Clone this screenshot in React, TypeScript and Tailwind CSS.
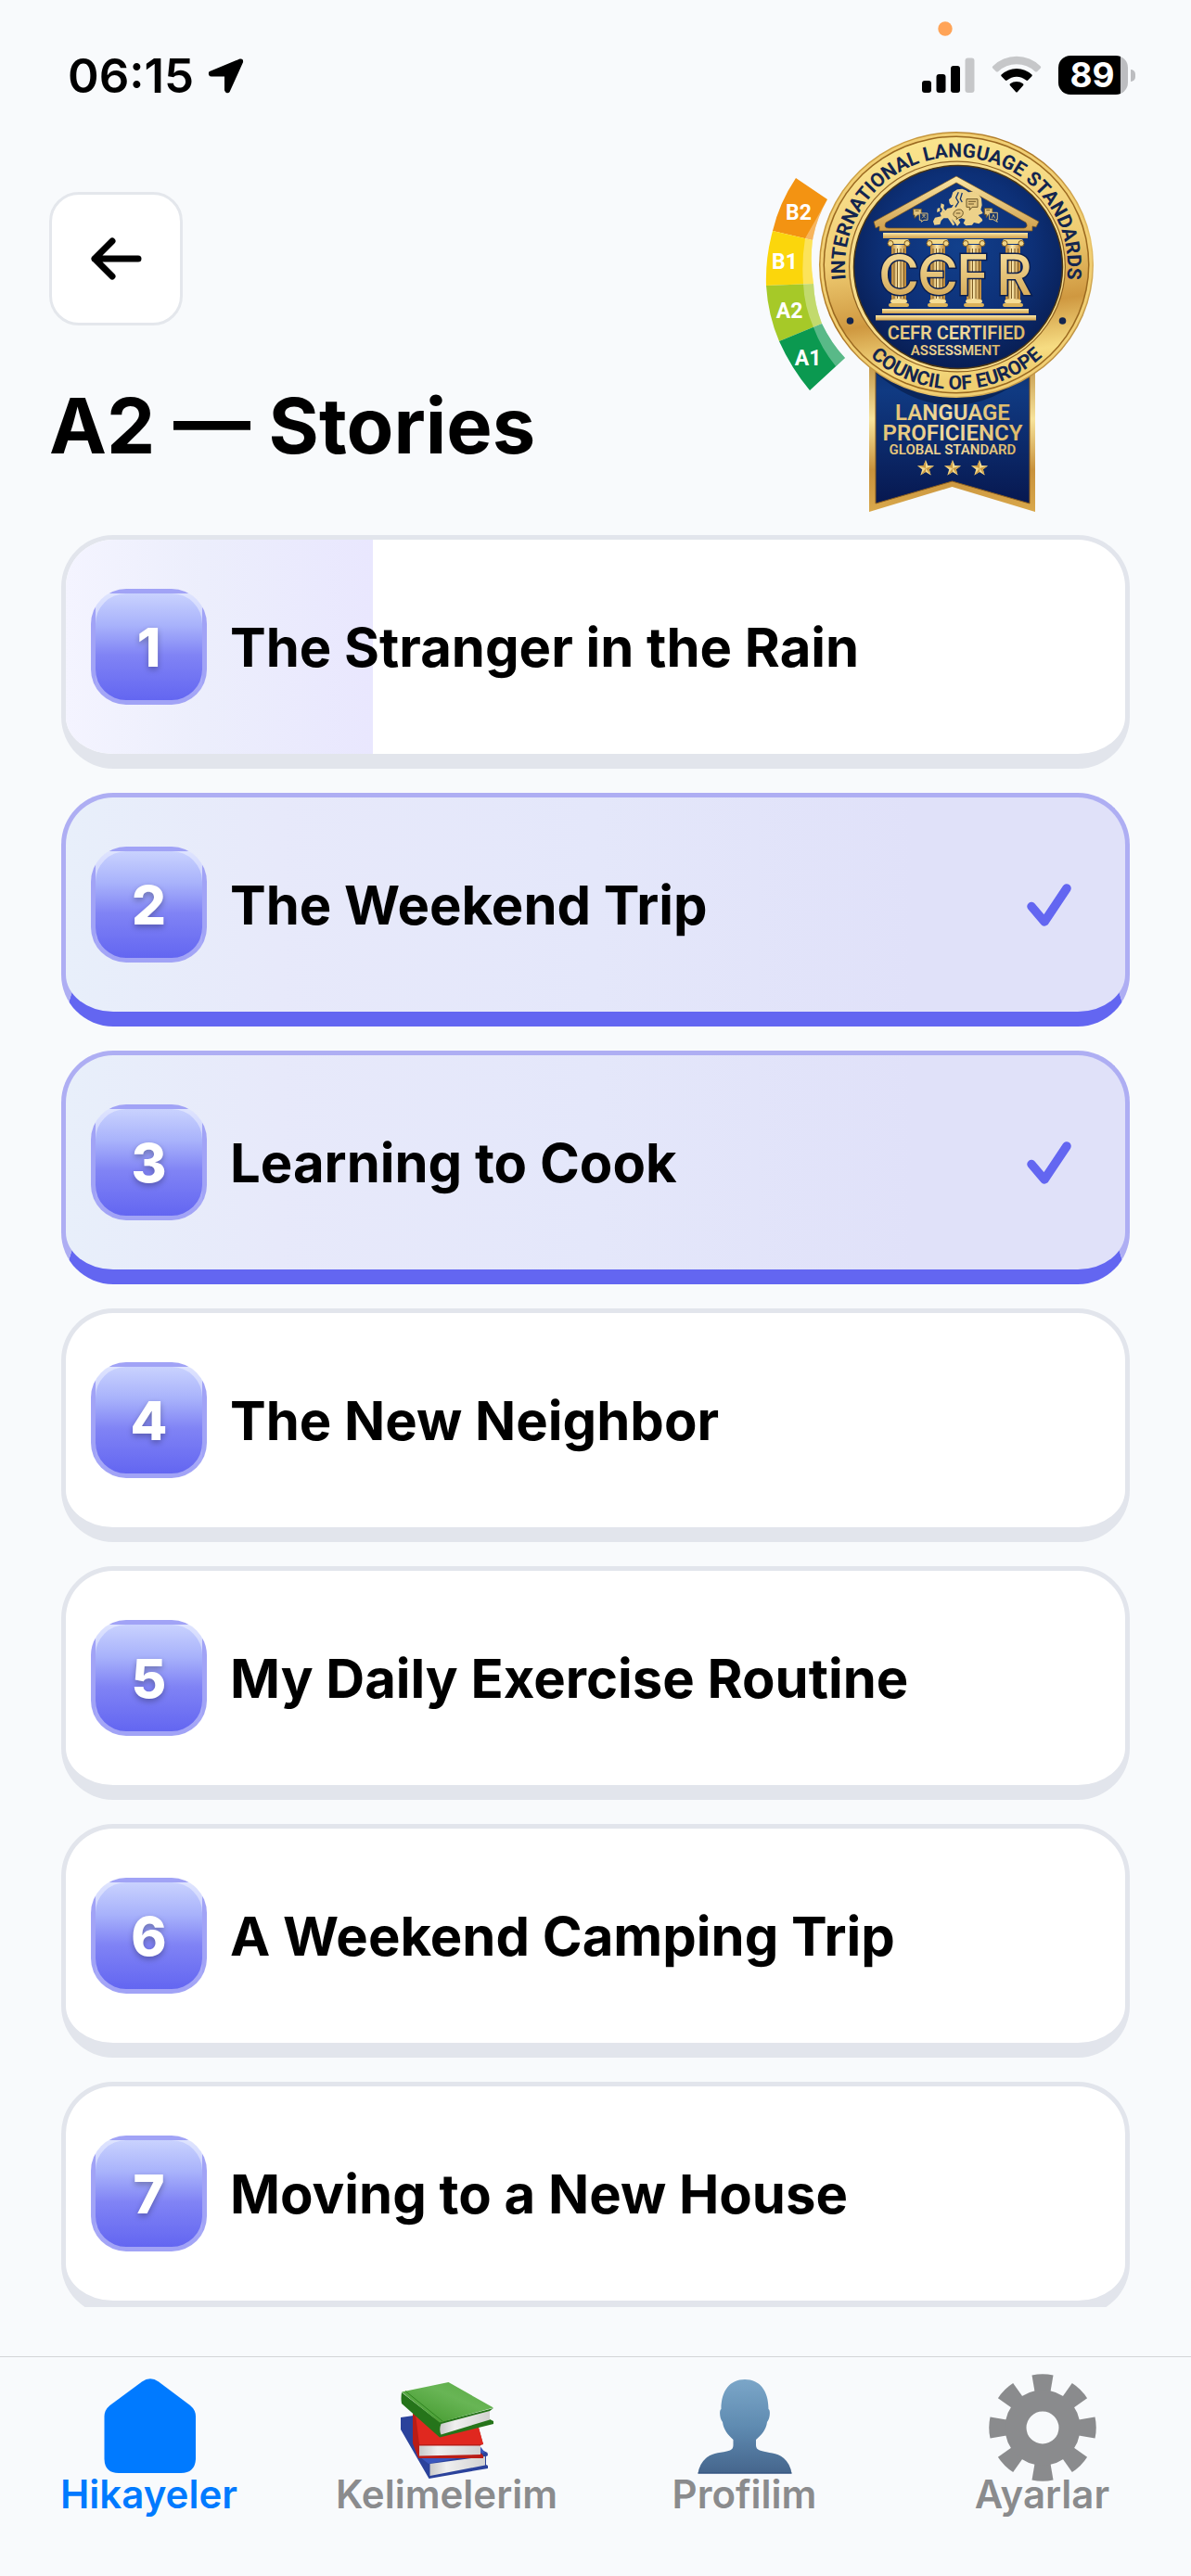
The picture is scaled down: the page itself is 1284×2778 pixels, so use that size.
import React from "react";

type Story = { title: string; done?: boolean; progress?: number };

const stories: Story[] = [
  { title: "The Stranger in the Rain", progress: 29 },
  { title: "The Weekend Trip", done: true },
  { title: "Learning to Cook", done: true },
  { title: "The New Neighbor" },
  { title: "My Daily Exercise Routine" },
  { title: "A Weekend Camping Trip" },
  { title: "Moving to a New House" },
];

function StatusBar() {
  return (
    <div className="relative flex h-[136px] shrink-0 items-start justify-between pl-[73px] pr-[60px] pt-[52px]">
      <div className="flex items-center gap-[14px]">
        <span className="text-[51px] font-semibold leading-[60px]">06:15</span>
        <svg width="40" height="40" viewBox="0 0 40 40" aria-label="Location">
          <path
            d="M36 3 L3.500 16.500 Q3 19 5 19 H20.500 V35 Q22 38 23.500 36 L37.500 5 Q38 2.500 36 3 Z"
            fill="#000"
            stroke="#000"
            strokeWidth="3"
            strokeLinejoin="round"
          />
        </svg>
      </div>
      <svg width="16" height="16" viewBox="0 0 16 16" className="absolute right-[257px] top-[23px]" aria-hidden="true">
        <circle cx="8" cy="8" r="7.700" fill="#ffa458" />
      </svg>
      <div className="flex items-center gap-[18px] pt-[8px]">
        <svg width="57" height="42" viewBox="0 0 57 42" aria-label="Signal">
          <rect x="0" y="27" width="10" height="13" rx="3" />
          <rect x="15.500" y="20" width="10" height="20" rx="3" />
          <rect x="31" y="11" width="10" height="29" rx="3" />
          <rect x="46.500" y="2.500" width="10" height="37.500" rx="3" fill="#c6c7c9" />
        </svg>
        <svg width="54" height="42" viewBox="0 0 54 42" aria-label="Wi-Fi">
          <path d="M1.200 11.500 A36.500 36.500 0 0 1 52.800 11.500 Q53.600 12.400 52.800 13.400 L49 17.200 Q48 18 47 17.200 A29 29 0 0 0 7 17.200 Q6 18 5 17.200 L1.200 13.400 Q0.400 12.400 1.200 11.500 Z" fill="#c6c7c9" />
          <path d="M10.500 20.500 A24 24 0 0 1 43.500 20.500 Q44.200 21.400 43.400 22.300 L39.200 26.500 Q38.200 27.300 37.200 26.500 A15.500 15.500 0 0 0 16.800 26.500 Q15.800 27.300 14.800 26.500 L10.600 22.300 Q9.800 21.400 10.500 20.500 Z" />
          <path d="M20 30.300 A11.500 11.500 0 0 1 34 30.300 Q35 31.200 34 32.200 L28 39 Q27 40 26 39 L20 32.200 Q19 31.200 20 30.300 Z" />
        </svg>
        <div className="flex items-center gap-[3px]">
          <div className="flex h-[42px] w-[75px] items-center justify-center rounded-[13px] bg-[linear-gradient(to_right,#000_67px,#bcbdc0_67px)] pr-[2px] text-[37px] font-bold leading-[42px] text-white">
            89
          </div>
          <div className="h-[13px] w-[5px] rounded-r-full bg-[#bcbdc0]" />
        </div>
      </div>
    </div>
  );
}

function Column({ x }: { x: number }) {
  return (
    <g>
      <rect x={x - 8} y="264" width="16" height="61" fill="url(#shaft)" />
      {[-5, -1.500, 2, 5.500].map((d) => (
        <path key={d} d={`M${x + d} 268 V322`} stroke="#7c5a22" strokeWidth="1" />
      ))}
      <rect x={x - 11} y="258" width="22" height="5" rx="2" fill="#f3d98a" />
      <circle cx={x - 9} cy="262.500" r="3" fill="#f0d588" stroke="#7a541b" strokeWidth="1" />
      <circle cx={x + 9} cy="262.500" r="3" fill="#f0d588" stroke="#7a541b" strokeWidth="1" />
      <rect x={x - 9} y="323" width="18" height="4" rx="2" fill="#f6de96" />
      <rect x={x - 11} y="327" width="22" height="4" rx="2" fill="#dcb35a" />
    </g>
  );
}

function Star({ x }: { x: number }) {
  return (
    <g transform={`translate(${x} 505)`}>
      <path
        d="M0 -9 L2.400 -3 L9 -2.800 L3.800 1.200 L5.600 7.600 L0 4 L-5.600 7.600 L-3.800 1.200 L-9 -2.800 L-2.400 -3 Z"
        fill="#f3d98c"
      />
      <path d="M0 -9 L0 0 L-9 -2.800 L-2.400 -3 Z M9 -2.800 L0 0 L5.600 7.600 L3.800 1.200 Z M0 4 L0 0 L-5.600 7.600 Z" fill="#c99a45" />
    </g>
  );
}

function EuropeMap() {
  return (
    <g transform="translate(820 136) scale(0.3333)">
      <path
        d="M611 250 L609 238 L617 230 L622 214 L636 205 L652 203 L664 208 L672 214 L690 212 L706 222 L714 234 L716 256 L712 270 L719 282 L704 288 L716 300 L718 306 L706 316 L690 312 L684 320 L664 322 L656 314 L662 302 L650 298 L640 302 L646 312 L636 324 L630 314 L618 300 L628 318 L622 322 L606 298 L592 298 L584 306 L580 318 L562 320 L558 308 L564 296 L584 292 L580 280 L596 276 L604 266 L618 264 L624 254 L616 256 Z"
        fill="#edd28a"
      />
      <path d="M640 214 L632 232 L640 246 L630 262 M652 216 L646 236 L652 246" stroke="#14356f" strokeWidth="4" fill="none" />
      <path d="M584 250 L594 254 L592 266 L600 276 L584 280 L588 270 L582 262 Z M572 266 L580 264 L580 276 L570 278 Z" fill="#edd28a" />
      <g fill="#e3c57e" stroke="#6a5528" strokeWidth="3">
        <path d="M666 236 H702 V262 H684 L676 272 V262 H666 Z" />
        <path d="M494 268 H520 V288 H508 L498 298 V288 H494 Z" />
        <path d="M724 266 H750 V286 H738 L730 296 V286 H724 Z" />
        <path d="M624 282 Q630 268 646 270 Q658 274 654 286 Q650 296 640 296 L634 302 L634 294 Q622 292 624 282 Z" />
      </g>
      <g fill="#16366f" stroke="#dcc07b" strokeWidth="3">
        <path d="M514 282 H540 V304 H528 L520 310 V304 H514 Z" />
        <path d="M740 280 H766 V302 H762 L766 310 L752 302 H740 Z" />
      </g>
      <path d="M672 244 H696 M672 252 H690 M632 282 H646 M500 274 H512 M730 272 H742" stroke="#6a5528" strokeWidth="3" />
      <path d="M522 288 H534 M528 286 V292 L522 298 M528 292 L534 298 M748 298 L753 286 L758 298" stroke="#dcc07b" strokeWidth="2.500" fill="none" />
    </g>
  );
}

function Badge() {
  return (
    <svg
      className="mr-[47px] h-[420px] w-[364px] shrink-0"
      viewBox="820 136 364 420"
      role="img"
      aria-label="CEFR certified assessment"
    >
      <defs>
        <linearGradient id="ring" x1="0" y1="0" x2="0.150" y2="1">
          <stop offset="0" stopColor="#fbe88f" />
          <stop offset="0.250" stopColor="#f6db86" />
          <stop offset="0.500" stopColor="#efcc72" />
          <stop offset="0.750" stopColor="#cf9840" />
          <stop offset="0.930" stopColor="#f6dc82" />
          <stop offset="1" stopColor="#f0cf72" />
        </linearGradient>
        <linearGradient id="rim" x1="0" y1="0" x2="1" y2="1">
          <stop offset="0" stopColor="#e5bd58" />
          <stop offset="0.400" stopColor="#a8701f" />
          <stop offset="0.700" stopColor="#e9c368" />
          <stop offset="1" stopColor="#94601c" />
        </linearGradient>
        <radialGradient id="navy" cx="0.500" cy="0.400" r="0.650">
          <stop offset="0" stopColor="#12408c" />
          <stop offset="0.550" stopColor="#0d3077" />
          <stop offset="1" stopColor="#071a4c" />
        </radialGradient>
        <linearGradient id="ribbon" x1="0" y1="0" x2="0" y2="1">
          <stop offset="0" stopColor="#0b2a66" />
          <stop offset="0.300" stopColor="#103a82" />
          <stop offset="1" stopColor="#071850" />
        </linearGradient>
        <linearGradient id="ribbonEdge" x1="0" y1="0" x2="0" y2="1">
          <stop offset="0" stopColor="#b07b2b" />
          <stop offset="0.450" stopColor="#f7e39b" />
          <stop offset="0.750" stopColor="#c8923c" />
          <stop offset="1" stopColor="#d9a84c" />
        </linearGradient>
        <linearGradient id="gold" x1="0" y1="0" x2="0" y2="1">
          <stop offset="0" stopColor="#fbe7a6" />
          <stop offset="1" stopColor="#cf9f4c" />
        </linearGradient>
        <linearGradient id="goldText" x1="0" y1="0" x2="1" y2="0">
          <stop offset="0" stopColor="#e3c377" />
          <stop offset="0.500" stopColor="#f1dba0" />
          <stop offset="1" stopColor="#dcb866" />
        </linearGradient>
        <linearGradient id="shaft" x1="0" y1="0" x2="1" y2="0">
          <stop offset="0" stopColor="#b98334" />
          <stop offset="0.450" stopColor="#fbe9ad" />
          <stop offset="1" stopColor="#b98334" />
        </linearGradient>
        <path id="topArc" d="M912.500 306 A120 118 0 1 1 1149.500 306" />
        <path id="bottomArc" d="M894 286 A137 134 0 0 0 1168 286" />
      </defs>

      {/* Level scale */}
      <path d="M858 192 Q840 219 833 249 L876 259 Q880 236 892 215 Z" fill="#f39312" />
      <path d="M833 249 Q825 278 826 308 L877 306 Q873 282 876 259 Z" fill="#fbd60c" />
      <path d="M826 308 Q828 340 840 368 L886 349 Q878 328 877 306 Z" fill="#a6c928" />
      <path d="M840 368 Q853 397 873 421 L911 386 Q896 370 886 349 Z" fill="#0b9950" />
      <path
        d="M892 215 Q880 236 876 259 Q873 282 877 306 Q878 328 886 349 Q896 370 911 386 L901 395 Q885 375 877 353 Q867 330 866 306 Q864 282 868 257 Z"
        fill="#fff"
        opacity="0.320"
      />
      <g fontFamily="Roboto" fontWeight="700" fontSize="23" fill="#fff" textAnchor="middle">
        <text x="861" y="237">B2</text>
        <text x="846" y="290">B1</text>
        <text x="851" y="343">A2</text>
        <text x="871" y="394">A1</text>
      </g>

      {/* Ribbon */}
      <path d="M937 370 H1116 V552 L1026.500 525 L937 552 Z" fill="url(#ribbonEdge)" />
      <path d="M944 370 H1110 V543 L1026.500 519 L944 543 Z" fill="url(#ribbon)" stroke="#8a5d1e" strokeWidth="1" />
      <path d="M944 390 H1110 V402 Q1070 437 1027 437 Q984 437 944 402 Z" fill="#04102e" opacity="0.450" />

      {/* Medal */}
      <ellipse cx="1031" cy="285.500" rx="148" ry="143.500" fill="url(#rim)" />
      <ellipse cx="1031" cy="285.500" rx="146.500" ry="142" fill="#f1cf74" />
      <ellipse cx="1031" cy="285.500" rx="143.500" ry="139" fill="#9a681f" />
      <ellipse cx="1031" cy="285.500" rx="142" ry="137.500" fill="url(#ring)" />
      <ellipse cx="1032" cy="287.500" rx="117" ry="114" fill="#8f611f" />
      <ellipse cx="1032" cy="287.500" rx="115.800" ry="112.800" fill="#f6dc8c" />
      <ellipse cx="1033" cy="288" rx="112.500" ry="109.500" fill="url(#navy)" stroke="#4b3513" strokeWidth="1.500" />
      <circle cx="916.500" cy="346" r="3.800" fill="#13254f" />
      <circle cx="1145.500" cy="346" r="3.800" fill="#13254f" />
      <g fontFamily="Roboto" fontWeight="700" fill="#13254f" textAnchor="middle">
        <text fontSize="21">
          <textPath href="#topArc" startOffset="50%">INTERNATIONAL LANGUAGE STANDARDS</textPath>
        </text>
        <text fontSize="21">
          <textPath href="#bottomArc" startOffset="50%">COUNCIL OF EUROPE</textPath>
        </text>
      </g>

      {/* Temple */}
      <path
        d="M1031 190 L1120 239 L1117 245 L1113 244 V249 H948 V244 L944 246 L942 239 Z M1031 197 L955 240 Q952 246 958 246 H1104 Q1109 245 1106 240 Z"
        fill="url(#gold)"
        fillRule="evenodd"
        stroke="#7a541b"
        strokeWidth="0.700"
      />
      <rect x="952" y="251" width="156" height="6" fill="url(#gold)" />
      <EuropeMap />
      <Column x={969} />
      <Column x={1011} />
      <Column x={1050} />
      <Column x={1092} />
      <rect x="951" y="333" width="158" height="5" fill="url(#gold)" />
      <rect x="944" y="340" width="173" height="5.500" fill="url(#gold)" />
      <text
        y="318"
        x="947 989 1031 1074"
        fontFamily="Inter"
        fontWeight="500"
        fontSize="60"
        fill="url(#gold)"
        stroke="#0b1f50"
        strokeWidth="3"
        paintOrder="stroke"
      >
        CЄFR
      </text>

      <g fontFamily="Roboto" fill="url(#goldText)" textAnchor="middle">
        <text x="1031" y="366" fontSize="20" fontWeight="600">CEFR CERTIFIED</text>
        <text x="1030" y="383" fontSize="15" fontWeight="600">ASSESSMENT</text>
        <text x="1027" y="453" fontSize="24" fontWeight="600">LANGUAGE</text>
        <text x="1027" y="475" fontSize="24" fontWeight="600">PROFICIENCY</text>
        <text x="1027" y="490" fontSize="15" fontWeight="600">GLOBAL STANDARD</text>
      </g>
      <Star x={998} />
      <Star x={1027} />
      <Star x={1056} />
    </svg>
  );
}

function Header() {
  return (
    <header className="flex shrink-0 items-start justify-between px-[53px]">
      <div className="pt-[71px]">
        <button
          aria-label="Back"
          className="flex size-[144px] items-center justify-center rounded-[32px] border-[3px] border-[#e4e7ec] bg-white"
        >
          <svg width="55" height="46" viewBox="0 0 55 46" fill="none" stroke="#000" strokeWidth="7" strokeLinecap="round" strokeLinejoin="round">
            <path d="M51 23 H4 M23 4 L4 23 L23 42" />
          </svg>
        </button>
        <h1 className="mt-[60px] whitespace-nowrap text-[83px] font-bold leading-[96px]">A2 — Stories</h1>
      </div>
      <Badge />
    </header>
  );
}

function StoryCard({ story, index }: { story: Story; index: number }) {
  const tone = story.done
    ? "border-[#aeaef3] border-b-[#6366f1] bg-[linear-gradient(to_right,#e8effa,#e7e9fa_20%,#e4e7fa_50%,#e0e1f9_80%)]"
    : "border-[#e2e5ec] bg-white";
  return (
    <li className="shrink-0">
      <button
        className={`relative flex h-[252px] w-full items-center gap-[25px] overflow-hidden rounded-[56px] border-[5px] border-b-[16px] pl-[27px] pr-[58px] text-left ${tone}`}
      >
        {story.progress !== undefined && (
          <span
            className="absolute inset-y-0 left-0 bg-[linear-gradient(to_right,#f4f4ff,#eceefc_45%,#e9e7fe)]"
            style={{ width: `${story.progress}%` }}
          />
        )}
        <span className="relative flex size-[125px] shrink-0 items-center justify-center rounded-[38px] border-[5px] border-white/40 bg-[#6366f1] bg-[linear-gradient(to_bottom,#c9d2fe,#a8b2fb_30%,#8083f5_58%,#6366f1)] bg-no-repeat text-[58px] font-extrabold leading-none text-white [text-shadow:0_3px_6px_rgba(0,0,0,0.28)]">
          {index + 1}
        </span>
        <span className="relative grow whitespace-nowrap text-[58px] font-bold leading-[72px]">{story.title}</span>
        {story.done && (
          <svg width="48" height="48" viewBox="0 0 48 48" fill="none" stroke="#6366f1" strokeWidth="9.500" strokeLinecap="round" strokeLinejoin="round" aria-label="Completed">
            <path d="M5 25.500 L19 42 L43 6" />
          </svg>
        )}
      </button>
    </li>
  );
}

function HouseIcon() {
  return (
    <svg width="116" height="116" viewBox="0 0 116 116" aria-hidden="true">
      <path
        d="M50 8.500 Q59 2 68 8.500 L102 34 Q108 39 108 46 V92 Q107 107 92 107 H25 Q10 107 9.500 92 V46 Q9.500 39 15.500 34 Z"
        fill="#007aff"
      />
    </svg>
  );
}

function BooksIcon() {
  return (
    <svg width="116" height="116" viewBox="0 0 116 116" aria-hidden="true">
      <defs>
        <linearGradient id="greenCover" x1="0" y1="1" x2="1" y2="0">
          <stop offset="0" stopColor="#3d9427" />
          <stop offset="0.600" stopColor="#68b555" />
          <stop offset="1" stopColor="#58a942" />
        </linearGradient>
        <linearGradient id="pages" x1="0" y1="0" x2="1" y2="0">
          <stop offset="0" stopColor="#c9c9c9" />
          <stop offset="0.300" stopColor="#efefef" />
          <stop offset="1" stopColor="#d2d2d2" />
        </linearGradient>
      </defs>
      <path d="M8 47 L22 45 L101.500 85 L102 88 L100 89 V98 L102 99 V102 L38.500 113 L8 60 Z" fill="#2b429b" />
      <path d="M24 86 L38 97 L99 85 L92 76 Z" fill="#3a57bd" />
      <path d="M39.500 97 L99 89 V98.500 L39.500 110 Z" fill="url(#pages)" />
      <path d="M21 43 L92 58 L97 76 L94 77 V85 L97 88 V91 H27 L21 75 Z" fill="#b91d17" />
      <path d="M24 44 L92 58 L97 76 H28 Z" fill="#e0281f" />
      <path d="M28 77.500 H94 V87 L28 88.500 Z" fill="url(#pages)" />
      <path d="M9 20 Q8 27 9 32 L50 68.500 L108 54 V51 L104 49 V40 L108 37 L50 52 Z" fill="#25741a" />
      <path d="M9 19.500 L59.500 9 L108 36.500 L50 52.500 Z" fill="url(#greenCover)" />
      <path d="M51.500 54 L104 40 V49.500 L51.500 65.500 Q49 60 51.500 54 Z" fill="url(#pages)" />
      <path d="M13 18.500 L53 51" stroke="#2f8420" strokeWidth="1" />
    </svg>
  );
}

function PersonIcon() {
  return (
    <svg width="116" height="116" viewBox="0 0 116 116" aria-hidden="true">
      <defs>
        <linearGradient id="person" x1="0" y1="0" x2="0" y2="1">
          <stop offset="0" stopColor="#7ba6c8" />
          <stop offset="0.500" stopColor="#5f8bb1" />
          <stop offset="1" stopColor="#45658c" />
        </linearGradient>
      </defs>
      <path
        d="M58 6 C42 6 32.500 18 32.500 38 C30 39 31 49 34 52 C35 60 40 66 45.500 71 V77 Q45.500 81 42 82.500 C32 86 24 84 16 91 Q9 97 7.500 107.500 H108.500 Q107 97 100 91 C92 84 84 86 74 82.500 Q70 81 70 77 V71 C76 66 81 60 82 52 C85 49 86 39 83.500 38 C83.500 18 74 6 58 6 Z"
        fill="url(#person)"
      />
      <path d="M7.500 107 H108.500" stroke="#2f4f7d" strokeWidth="1" />
    </svg>
  );
}

function GearIcon() {
  return (
    <svg width="116" height="116" viewBox="0 0 116 116" fill="#8a8b8d" aria-hidden="true">
      {[0, 45, 90, 135, 180, 225, 270, 315].map((a) => (
        <path key={a} d="M46.500 1.500 Q58 -1 69.500 1.500 L66 22 H50 Z" transform={`rotate(${a} 58 58)`} />
      ))}
      <circle cx="58" cy="58" r="29" fill="none" stroke="#8a8b8d" strokeWidth="23" />
    </svg>
  );
}

const tabs = [
  { label: "Hikayeler", Icon: HouseIcon, active: true },
  { label: "Kelimelerim", Icon: BooksIcon },
  { label: "Profilim", Icon: PersonIcon },
  { label: "Ayarlar", Icon: GearIcon },
];

export default function App() {
  return (
    <div className="flex h-screen flex-col bg-[#f8fafc] font-['Inter',sans-serif] text-black">
      <StatusBar />
      <Header />
      <main className="mx-[66px] mt-[21px] min-h-0 grow overflow-hidden">
        <ol className="flex flex-col gap-[26px]">
          {stories.map((story, i) => (
            <StoryCard key={story.title} story={story} index={i} />
          ))}
        </ol>
      </main>
      <nav className="mt-[53px] grid h-[237px] shrink-0 grid-cols-4 border-t border-[#d3d5d8] pt-[18px]">
        {tabs.map(({ label, Icon, active }) => (
          <a
            key={label}
            href={`#${label.toLowerCase()}`}
            aria-current={active ? "page" : undefined}
            className={`flex flex-col items-center ${active ? "text-[#007aff]" : "text-[#8a8b8d]"}`}
          >
            <Icon />
            <span className="-mt-[10px] text-[42px] font-semibold leading-[48px]">{label}</span>
          </a>
        ))}
      </nav>
    </div>
  );
}
